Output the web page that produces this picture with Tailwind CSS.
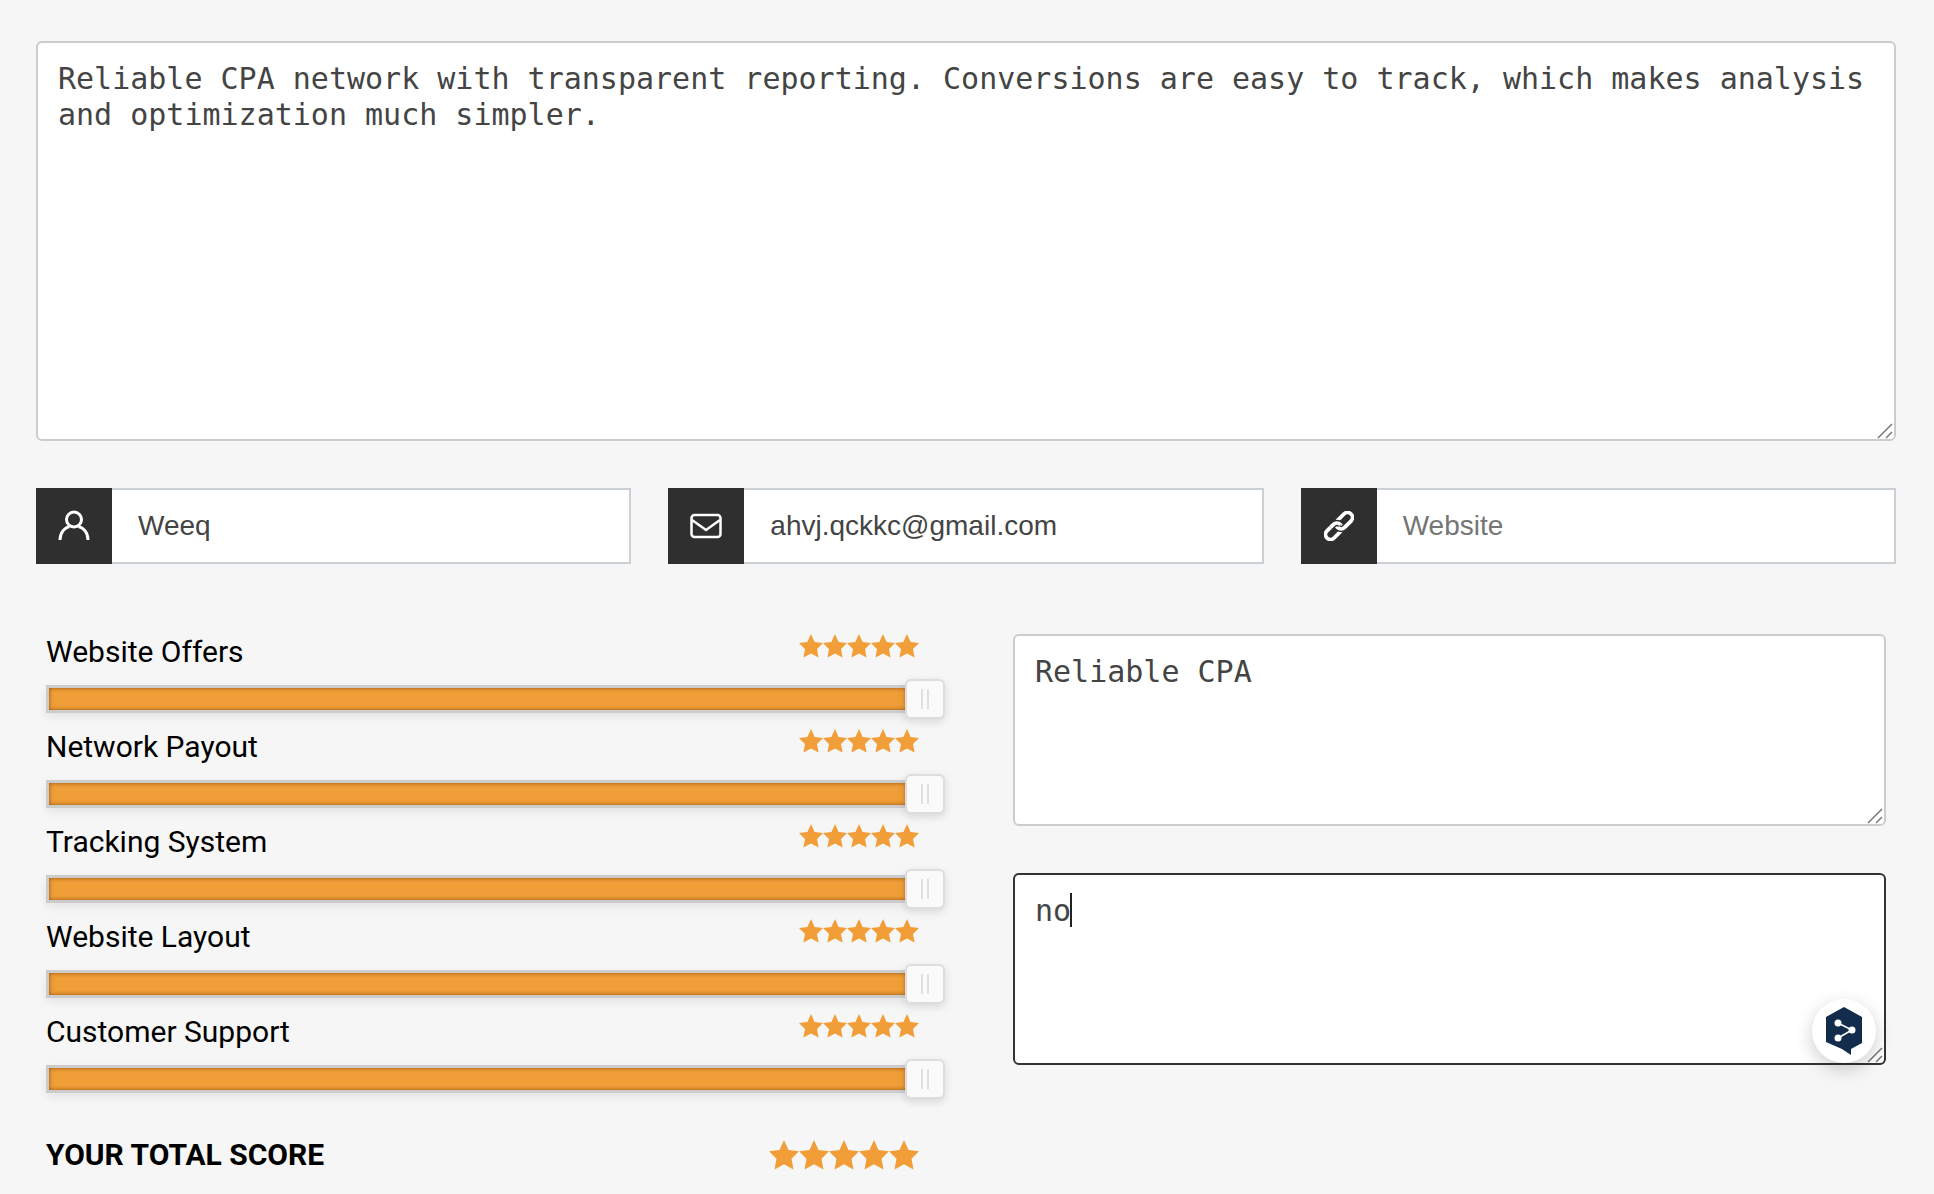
<!DOCTYPE html>
<html>
    <head>
        <title>Leave a review</title>
        <script src="https://cdn.jsdelivr.net/npm/@tailwindcss/browser@4"></script>
    </head>

    <body class="w-screen h-screen overflow-hidden bg-[#f6f6f6] font-['Roboto',sans-serif]">
        <svg class="hidden">
            <symbol id="star" viewBox="0 0 24 24"><path d="M12 0L15.600 7.900 24 9 18 14.900 19.600 23.500 12 19.400 4.400 23.500 6 14.900 0 9 8.400 7.900z" fill="#f29e38"/></symbol>
            <symbol id="grip" viewBox="0 0 16 16"><path d="M1 15L15 1M9 15l6-6" stroke="#777777" stroke-width="1.500" fill="none"/></symbol>
        </svg>

        <div class="relative w-full h-full pl-[36px] pr-[38px] pt-[41px]">
            <div class="relative">
                <textarea class="block w-full h-[400px] px-[20px] py-[18px] bg-white border-2 border-[#cccccc] rounded-[6px] font-['DejaVu_Sans_Mono',monospace] text-[30px] leading-[36px] text-[#444444] outline-none resize-none">Reliable CPA network with transparent reporting. Conversions are easy to track, which makes analysis and optimization much simpler.</textarea>
                <svg class="absolute right-[3px] bottom-[2px] pointer-events-none" width="16" height="16"><use href="#grip"/></svg>
            </div>

            <div class="grid grid-cols-3 gap-[37px] mt-[47px]">
                <div class="flex h-[76px]">
                    <div class="w-[76px] shrink-0 bg-[#2f2f2f] flex items-center justify-center">
                        <svg width="36" height="36" viewBox="0 0 36 36" fill="none" stroke="white" stroke-width="3"><circle cx="18" cy="11.500" r="7.500"/><path d="M4 32c0-8 5-12.500 9.500-13.500M32 32c0-8-5-12.500-9.500-13.500"/></svg>
                    </div>
                    <div class="flex-1 flex items-center pl-[26px] bg-white border-y-2 border-r-2 border-[#cbd0d6] font-['Liberation_Sans',sans-serif] text-[28px] text-[#444444]">Weeq</div>
                </div>
                <div class="flex h-[76px]">
                    <div class="w-[76px] shrink-0 bg-[#2f2f2f] flex items-center justify-center">
                        <svg width="32" height="26" viewBox="0 0 32 26" fill="none" stroke="white" stroke-width="2.500"><rect x="1.500" y="2" width="29" height="22" rx="3"/><path d="M2 7l14 10L30 7"/></svg>
                    </div>
                    <div class="flex-1 flex items-center pl-[26px] bg-white border-y-2 border-r-2 border-[#cbd0d6] font-['Liberation_Sans',sans-serif] text-[28px] text-[#444444]">ahvj.qckkc@gmail.com</div>
                </div>
                <div class="flex h-[76px]">
                    <div class="w-[76px] shrink-0 bg-[#2f2f2f] flex items-center justify-center">
                        <svg width="30" height="30" viewBox="0 0 30 30" fill="none" stroke-width="3.800">
                            <g transform="rotate(-45 15 15)">
                                <rect x="-2" y="10" width="19" height="10" rx="5" stroke="white"/>
                                <rect x="13" y="10" width="19" height="10" rx="5" stroke="#2f2f2f" stroke-width="6.500"/>
                                <rect x="13" y="10" width="19" height="10" rx="5" stroke="white"/>
                                <path d="M8 10h4a5 5 0 0 1 5 5" stroke="#2f2f2f" stroke-width="6.500"/>
                                <path d="M8 10h4a5 5 0 0 1 5 5" stroke="white"/>
                            </g>
                        </svg>
                    </div>
                    <div class="flex-1 flex items-center pl-[26px] bg-white border-y-2 border-r-2 border-[#cbd0d6] font-['Liberation_Sans',sans-serif] text-[28px] text-[#757575]">Website</div>
                </div>
            </div>

            <div class="flex justify-between mt-[71px] pr-[10px]">
                <div class="w-[899px] pl-[10px]">
                    <div id="ratings" class="-mt-[1px]"></div>
                    <div class="flex items-center justify-between w-[873px] mt-[29px] h-[32px]">
                        <p class="text-[30px] font-bold text-black">YOUR TOTAL SCORE</p>
                        <div id="total" class="flex mt-[2px]"></div>
                    </div>
                </div>

                <div class="flex flex-col gap-[47px] w-[873px] -mt-[1px]">
                    <div class="relative">
                        <textarea class="block w-full h-[192px] px-[20px] py-[18px] bg-white border-2 border-[#cccccc] rounded-[6px] font-['DejaVu_Sans_Mono',monospace] text-[30px] leading-[36px] text-[#444444] outline-none resize-none">Reliable CPA</textarea>
                        <svg class="absolute right-[3px] bottom-[2px] pointer-events-none" width="16" height="16"><use href="#grip"/></svg>
                    </div>
                    <div class="relative">
                        <textarea class="block w-full h-[192px] px-[20px] py-[18px] bg-white border-2 border-[#333333] rounded-[6px] font-['DejaVu_Sans_Mono',monospace] text-[30px] leading-[36px] text-[#444444] outline-none resize-none">no</textarea>
                        <svg class="absolute right-[3px] bottom-[2px] pointer-events-none" width="16" height="16"><use href="#grip"/></svg>
                        <span class="absolute left-[57px] top-[20px] w-[2px] h-[34px] bg-[#222222]"></span>
                        <div class="absolute right-[10px] bottom-[2px] w-[64px] h-[64px] rounded-full bg-white shadow-[0_6px_18px_rgba(0,0,0,0.2)] flex items-center justify-center">
                            <svg width="40" height="50" viewBox="0 0 40 50">
                                <path d="M20 1l18 10v26L27 43v6l-9-6L2 36V11z" fill="#142c4c"/>
                                <path d="M14 17l14 7-14 8" fill="none" stroke="white" stroke-width="1.500"/>
                                <circle cx="14" cy="17" r="3.500" fill="white"/><circle cx="28" cy="24" r="3.500" fill="white"/><circle cx="14" cy="32" r="3.500" fill="white"/>
                            </svg>
                        </div>
                    </div>
                </div>
            </div>
        </div>

        <script>
            const labels = ["Website Offers", "Network Payout", "Tracking System", "Website Layout", "Customer Support"];
            const stars = (size) => `<svg width="${size}" height="${size}"><use href="#star"/></svg>`.repeat(5);

            labels.forEach(label => {
                const row = document.createElement("div");
                row.className = "h-[95px] relative";
                row.innerHTML = `
                    <div class="flex justify-between w-[873px] h-[51px]">
                        <p class="text-[30px] leading-[34px] pt-[1px] text-black">${label}</p>
                        <div class="flex h-[24px]">${stars(24)}</div>
                    </div>
                    <div class="relative w-[864px] h-[28px] bg-[#f6f6f6] border-[3px] border-[#cccccc] shadow-[0_4px_10px_rgba(0,0,0,0.08)]">
                        <div class="h-full bg-[#f09e38] shadow-[inset_0_0_4px_rgba(120,60,0,0.8)]"></div>
                        <div class="absolute right-[-38px] top-[-9px] w-[40px] h-[40px] bg-[#fafafa] border-2 border-[#dddddd] rounded-[6px] shadow-[0_3px_8px_rgba(0,0,0,0.12)] flex items-center justify-center gap-[4px]">
                            <span class="w-[2px] h-[20px] bg-[#e0e0e0]"></span><span class="w-[2px] h-[20px] bg-[#e0e0e0]"></span>
                        </div>
                    </div>`;
                document.getElementById("ratings").appendChild(row);
            });

            document.getElementById("total").innerHTML = stars(30);
        </script>
    </body>

</html>
